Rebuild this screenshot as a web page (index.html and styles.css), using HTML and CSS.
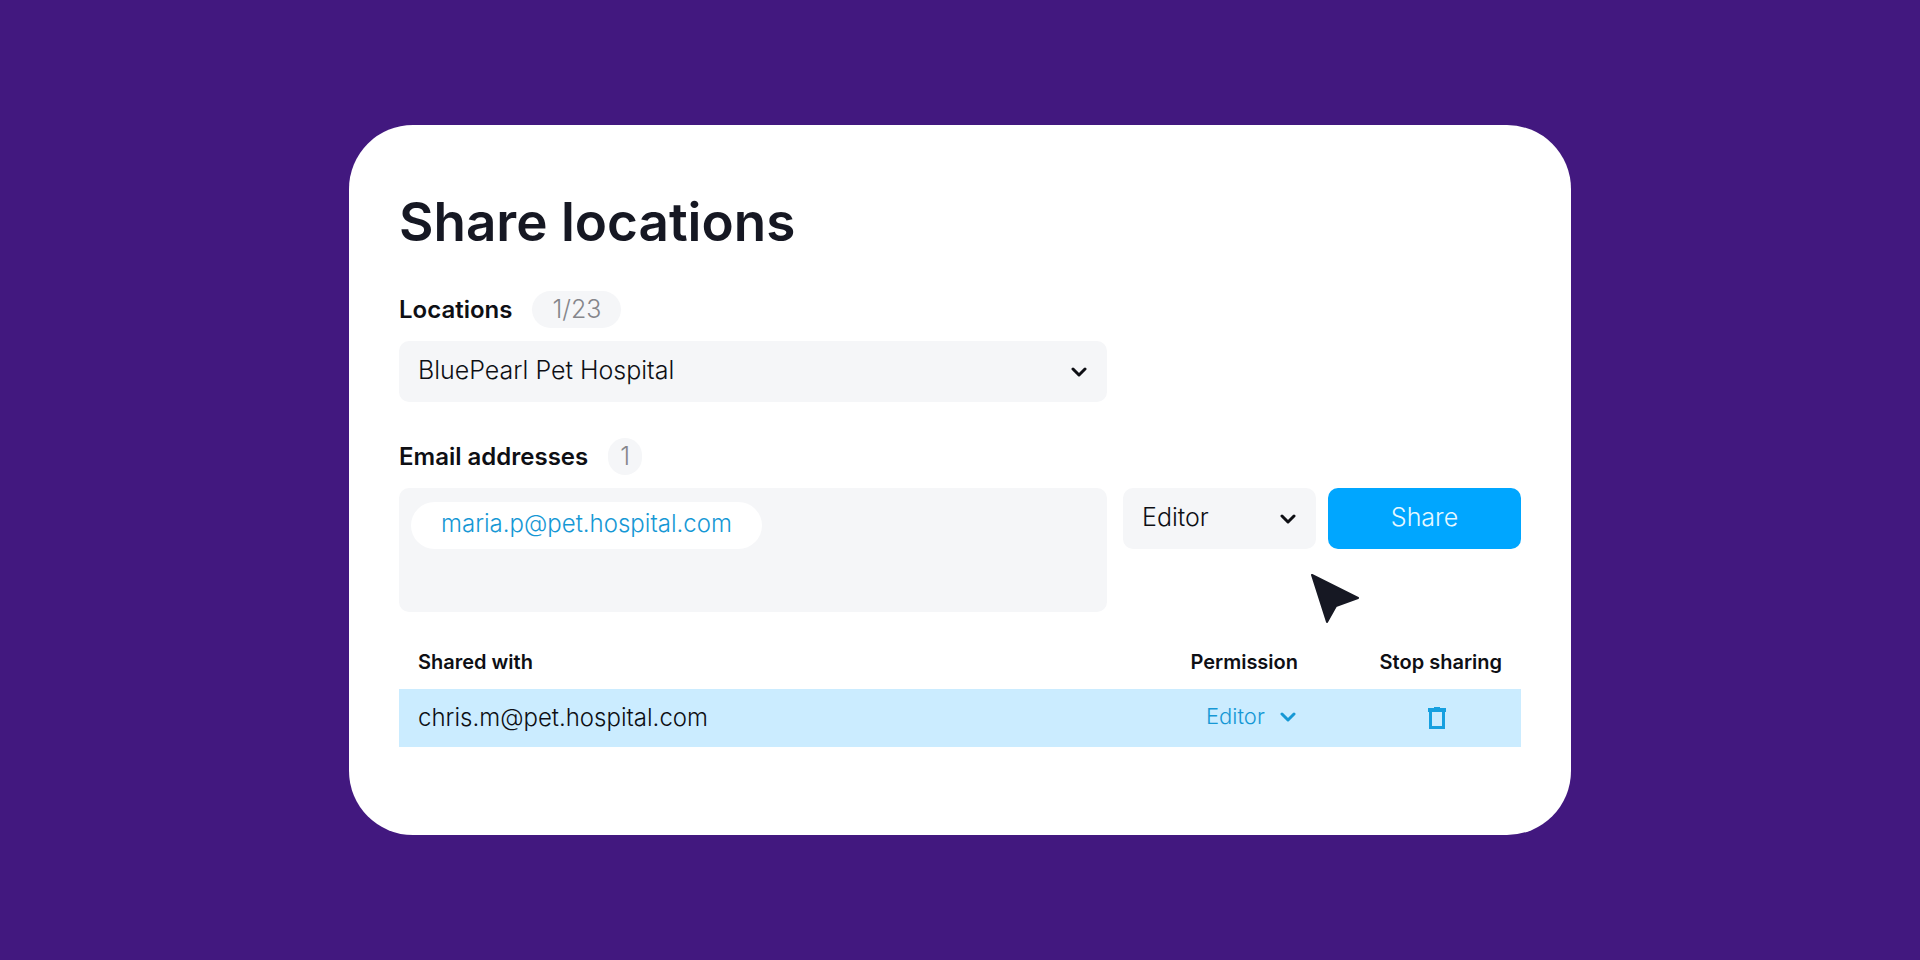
FILE: index.html
```html
<!DOCTYPE html>
<html lang="en">
<head>
  <meta charset="UTF-8">
  <meta name="viewport" content="width=device-width, initial-scale=1">
  <title>Share locations</title>
  <link rel="stylesheet" href="styles.css">
</head>

<body>
  <main class="card">
    <h1>Share locations</h1>

    <form class="share-form">
      <div class="field-head">
        <label for="location">Locations</label>
        <span class="count">1/23</span>
      </div>
      <div class="form-row">
        <div class="select">
          <select id="location">
            <option>BluePearl Pet Hospital</option>
          </select>
          <svg class="chevron" viewBox="0 0 16 10" aria-hidden="true"><path d="M2 2l6 6 6-6"/></svg>
        </div>
      </div>

      <div class="field-head">
        <label for="emails">Email addresses</label>
        <span class="count round">1</span>
      </div>
      <div class="form-row">
        <div class="emails">
          <span class="chip">maria.p@pet.hospital.com</span>
          <input type="text" id="emails">
        </div>
        <div class="actions">
          <div class="select">
            <select id="role" aria-label="Permission">
              <option>Editor</option>
              <option>Viewer</option>
            </select>
            <svg class="chevron" viewBox="0 0 16 10" aria-hidden="true"><path d="M2 2l6 6 6-6"/></svg>
          </div>
          <button type="button" class="share-button">Share</button>
          <svg class="cursor" viewBox="0 0 50 50" aria-hidden="true"><path d="M2 2L48 25 26 33 17 49z"/></svg>
        </div>
      </div>
    </form>

    <table>
      <thead>
        <tr>
          <th>Shared with</th>
          <th class="permission">Permission</th>
          <th class="stop">Stop sharing</th>
        </tr>
      </thead>
      <tbody>
        <tr>
          <td>chris.m@pet.hospital.com</td>
          <td class="permission">
            <div class="select small">
              <select aria-label="Permission for chris.m@pet.hospital.com">
                <option>Editor</option>
                <option>Viewer</option>
              </select>
              <svg class="chevron" viewBox="0 0 16 10" aria-hidden="true"><path d="M2 2l6 6 6-6"/></svg>
            </div>
          </td>
          <td class="stop">
            <button type="button" class="trash" aria-label="Stop sharing">
              <svg viewBox="0 0 18 22" aria-hidden="true"><path d="M6 0h6v1h6v4h-1v17H1V5H0V1h6zM4 5v14h10V5z"/></svg>
            </button>
          </td>
        </tr>
      </tbody>
    </table>
  </main>
</body>
</html>
```
FILE: styles.css
```css
:root{
  --purple: #42187f;
  --ink:    #161823;
  --field:  #f5f6f8;
  --blue:   #00a6ff;
  --link:   #1698d5;
}

*{box-sizing:border-box;margin:0;padding:0;}

body{
  min-height:100vh;
  display:flex;
  align-items:center;
  justify-content:center;
  background:var(--purple);
  color:#0e0f14;
  font-family:Inter,sans-serif;
  font-size:24px;
  font-weight:300;
}

select,input,button{
  font:inherit;
  color:inherit;
  border:none;
  background:none;
  outline:none;
}

.card{
  width:100%;
  max-width:1222px;
  padding:64px 50px 88px;
  background:#fff;
  border-radius:64px;
}

h1{
  color:var(--ink);
  font-size:53px;
  line-height:66px;
  font-weight:600;
}

/* ---------- Form ---------- */
.field-head{
  display:flex;
  align-items:center;
  gap:20px;
  height:37px;
  margin:36px 0 13px;
}

.field-head label{font-weight:600;}

.count{
  padding:0 20px;
  font-size:25px;
  line-height:37px;
  border-radius:19px;
  background:var(--field);
  color:#85868b;
}

.count.round{
  width:34px;
  padding:0;
  text-align:center;
}

.form-row{
  display:grid;
  grid-template-columns:minmax(0,1fr) 398px;
  column-gap:16px;
  align-items:start;
}

.select{
  position:relative;
  color:#0e0f14;
  font-size:25px;
}

.select select{
  width:100%;
  height:61px;
  padding:0 50px 3px 19px;
  appearance:none;
  border-radius:10px;
  background:var(--field);
}

.chevron{
  position:absolute;
  right:20px;
  top:50%;
  width:16px;
  height:10px;
  margin-top:-5px;
  fill:none;
  stroke:currentColor;
  stroke-width:3;
  stroke-linecap:round;
  stroke-linejoin:round;
  pointer-events:none;
}

.emails{
  display:flex;
  align-items:flex-start;
  gap:12px;
  min-height:124px;
  padding:14px 12px;
  border-radius:10px;
  background:var(--field);
}

.chip{
  padding:0 30px 4px;
  line-height:43px;
  border-radius:24px;
  background:#fff;
  color:var(--link);
}

.emails input{
  flex:1;
  min-width:0;
  height:47px;
}

.actions{
  position:relative;
  display:grid;
  grid-template-columns:1fr 1fr;
  gap:12px;
}

.share-button{
  height:61px;
  padding-bottom:3px;
  border-radius:10px;
  background:var(--blue);
  color:#e6f8ff;
  font-size:25px;
}

.cursor{
  position:absolute;
  left:187px;
  top:85px;
  width:50px;
  height:50px;
  fill:var(--ink);
  stroke:var(--ink);
  stroke-width:2;
  stroke-linejoin:round;
}

/* ---------- Shared with ---------- */
table{
  width:100%;
  margin-top:24px;
  border-collapse:collapse;
}

th{
  height:53px;
  padding:0 19px 1px;
  font-size:20px;
  font-weight:600;
  text-align:left;
}

td{
  height:58px;
  padding:0 19px 2px;
  background:#cbecff;
}

.permission{
  width:166px;
  text-align:right;
}

.stop{
  width:204px;
  text-align:right;
}

td.permission{padding-right:21px;}

.small{
  display:inline-block;
  color:var(--link);
  font-size:22px;
}

.small select{
  width:90px;
  height:32px;
  padding:0 20px 3px 0;
  background:none;
}

.small .chevron{right:0;}

td.stop{
  padding-right:75px;
  padding-bottom:4px;
}

.trash{
  display:inline-block;
  width:18px;
  height:22px;
  vertical-align:middle;
  color:#16a0e0;
}

.trash svg{
  display:block;
  width:18px;
  height:22px;
  fill:currentColor;
  fill-rule:evenodd;
}
```
